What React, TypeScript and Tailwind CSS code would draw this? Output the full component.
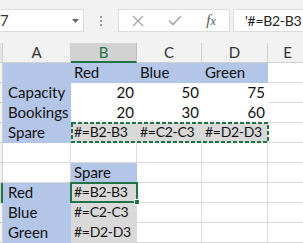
import React from "react";

type Cell = { t?: string; fill?: "blue" | "gray" | "white"; align?: "r" | "l" };

const rows: Cell[][] = [
  [{ fill: "blue" }, { t: "Red", fill: "blue" }, { t: "Blue", fill: "blue" }, { t: "Green", fill: "blue" }, {}],
  [{ t: "Capacity", fill: "blue" }, { t: "20", fill: "white", align: "r" }, { t: "50", fill: "white", align: "r" }, { t: "75", fill: "white", align: "r" }, {}],
  [{ t: "Bookings", fill: "blue" }, { t: "20", fill: "white", align: "r" }, { t: "30", fill: "white", align: "r" }, { t: "60", fill: "white", align: "r" }, {}],
  [{ t: "Spare", fill: "blue" }, { t: "#=B2-B3", fill: "gray" }, { t: "#=C2-C3", fill: "gray" }, { t: "#=D2-D3", fill: "gray" }, {}],
  [{}, {}, {}, {}, {}],
  [{}, { t: "Spare", fill: "blue" }, {}, {}, {}],
  [{ t: "Red", fill: "blue" }, { t: "#=B2-B3", fill: "gray" }, {}, {}, {}],
  [{ t: "Blue", fill: "blue" }, { t: "#=C2-C3", fill: "gray" }, {}, {}, {}],
  [{ t: "Green", fill: "blue" }, { t: "#=D2-D3", fill: "gray" }, {}, {}, {}],
  [{}, {}, {}, {}, {}],
];

function cellClass(c: Cell) {
  if (c.fill === "blue") return "bg-[#b4c6e7] border-r border-b border-[#b4c6e7]";
  if (c.fill === "gray") return "bg-[#d9d9d9] border-r border-b border-[#d9d9d9]";
  if (c.fill === "white") return "bg-white border-r border-b border-white";
  return "bg-white border-r border-b border-[#dadada]";
}

export default function App() {
  return (
    <div
      className="w-[303px] h-[243px] overflow-hidden bg-[#f2f2f2] relative text-[#111]"
      style={{ fontFamily: "Lato, 'Liberation Sans', sans-serif" }}
    >
      {/* toolbar */}
      <div className="h-[43px] flex items-start pt-[9px] bg-[#f2f2f2]">
        <div className="w-[84px] h-[23px] bg-white border border-[#dcdcdc] border-l-0 flex items-center justify-between pr-[4px]">
          <span className="text-[15px] text-[#333] leading-none">7</span>
          <svg width="7" height="4" viewBox="0 0 7 4"><path d="M0 0h7L3.5 4z" fill="#666" /></svg>
        </div>
        <div className="w-[34px] h-[23px] flex flex-col items-center justify-center gap-[2px]">
          <div className="w-[2px] h-[2px] bg-[#999]" />
          <div className="w-[2px] h-[2px] bg-[#999]" />
          <div className="w-[2px] h-[2px] bg-[#999]" />
        </div>
        <div className="w-[112px] h-[23px] bg-white border border-[#dcdcdc] flex items-center">
          <div className="w-[38px] flex justify-center">
            <svg width="12" height="12" viewBox="0 0 12 12"><path d="M1 1l10 10M11 1L1 11" stroke="#a6a6a6" strokeWidth="1.3" /></svg>
          </div>
          <div className="w-[36px] flex justify-center">
            <svg width="14" height="11" viewBox="0 0 14 11"><path d="M1 5.5l4 4L13 1" stroke="#a6a6a6" strokeWidth="1.6" fill="none" /></svg>
          </div>
          <div className="w-[36px] flex justify-center">
            <span className="text-[15px] italic text-[#555]" style={{ fontFamily: "'Liberation Serif', serif" }}>f<span className="text-[12px]">x</span></span>
          </div>
        </div>
        <div className="ml-[3px] flex-1 min-w-0 h-[23px] bg-white border border-[#dcdcdc] border-r-0 flex items-center pl-[11px] overflow-hidden">
          <span className="text-[14px] tracking-[-0.3px] text-[#222] whitespace-nowrap">'#=B2-B3</span>
        </div>
      </div>

      {/* grid */}
      <div className="grid grid-cols-[3px_68px_66px_65px_66px_40px] grid-rows-[20px_repeat(10,20px)]">
        <div className="bg-[#e6e6e6] border-r border-b border-[#cfcfcf]" />
        {["A", "B", "C", "D", "E"].map((h) => (
          <div
            key={h}
            className={
              h === "B"
                ? "bg-[#d2d2d2] border-r border-[#bdbdbd] border-b-2 border-b-[#217346] text-[#217346] flex items-center justify-center text-[15px]"
                : "bg-[#f2f2f2] border-r border-b border-[#d0d0d0] text-[#333] flex items-center justify-center text-[15px]"
            }
          >
            {h}
          </div>
        ))}
        {rows.map((r, i) => (
          <React.Fragment key={i}>
            <div className={i === 6 ? "bg-[#d2d2d2] border-r-2 border-[#217346]" : "bg-[#f2f2f2] border-r border-b border-[#d0d0d0]"} />
            {r.map((c, j) => {
              const isFormula = c.t?.startsWith("#") ?? false;
              return (
                <div
                  key={j}
                  className={
                    cellClass(c) +
                    " flex items-end pb-[1px] leading-[18px] whitespace-nowrap overflow-hidden " +
                    (isFormula ? "text-[14px] tracking-[-0.3px] " : "text-[15px] ") +
                    (c.align === "r" ? "justify-end pr-[2px]" : j === 0 ? "pl-[5px]" : "pl-[3px]")
                  }
                >
                  {c.t}
                </div>
              );
            })}
          </React.Fragment>
        ))}
      </div>

      {/* copy marquee B4:D4 */}
      <div className="absolute left-[71px] top-[122px] w-[198px] h-[21px] pointer-events-none">
        <svg width="198" height="21" className="block">
          <rect x="1" y="1" width="196" height="19" fill="none" stroke="#217346" strokeWidth="2" strokeDasharray="4 2" />
        </svg>
      </div>

      {/* active cell B7 */}
      <div className="absolute left-[70px] top-[182px] w-[68px] h-[21px] border-2 border-[#217346] pointer-events-none" />
      <div className="absolute left-[134px] top-[199px] w-[6px] h-[6px] bg-[#217346] border border-white pointer-events-none" />
    </div>
  );
}
